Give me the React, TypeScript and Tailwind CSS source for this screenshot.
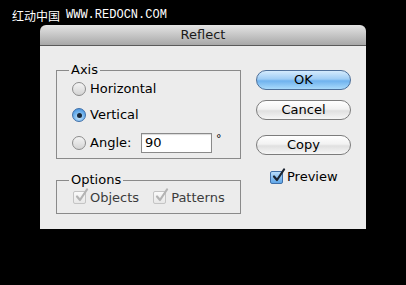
import React from "react";

const font = { fontFamily: '"DejaVu Sans", "Liberation Sans", sans-serif' };

function Radio({ checked }: { checked?: boolean }) {
  return checked ? (
    <div className="w-[14px] h-[14px] rounded-full border border-[#3f6fa8] bg-[radial-gradient(circle_at_50%_70%,#c8e6fc_0%,#6cb0ec_55%,#3a86d6_100%)] flex items-center justify-center shrink-0">
      <div className="w-[5px] h-[5px] rounded-full bg-[#1a2838]" />
    </div>
  ) : (
    <div className="w-[14px] h-[14px] rounded-full border border-[#8c8c8c] bg-[linear-gradient(#f4f4f4,#d4d4d4)] shrink-0" />
  );
}

function Check({ disabled, blue }: { disabled?: boolean; blue?: boolean }) {
  const box = blue
    ? "border-[#3f6fa8] bg-[linear-gradient(#b8dcfa,#5fa6e8)]"
    : "border-[#c4c4c4] bg-[linear-gradient(#fafafa,#e8e8e8)]";
  return (
    <div className={`relative w-[13px] h-[13px] rounded-[2px] border ${box} shrink-0`}>
      <svg className="absolute left-[1px] top-[-4px]" width="14" height="15" viewBox="0 0 14 15">
        <path
          d="M2 8.5 L5 12 L12 1.5"
          fill="none"
          stroke={disabled ? "#b4b4b4" : "#1c2430"}
          strokeWidth="2.2"
          strokeLinecap="round"
          strokeLinejoin="round"
        />
      </svg>
    </div>
  );
}

function Btn({ label, primary }: { label: string; primary?: boolean }) {
  return (
    <div
      className={`w-[95px] h-[20px] rounded-full border flex items-center justify-center text-[13px] text-black ${
        primary
          ? "border-[#4d6f99] bg-[linear-gradient(#d4ebfd_0%,#9fcdf5_45%,#6fb2ee_55%,#a9dafb_100%)]"
          : "border-[#7c7c7c] bg-[linear-gradient(#ffffff_0%,#f2f2f2_45%,#e0e0e0_55%,#f6f6f6_100%)]"
      }`}
    >
      {label}
    </div>
  );
}

export default function App() {
  return (
    <div className="w-[406px] h-[285px] bg-black overflow-hidden" style={font}>
      <div className="h-[25px] pl-[12px] pt-[9px] flex items-start text-white text-[12px] leading-[13px]">
        <span style={{ fontFamily: '"Noto Sans CJK SC", sans-serif' }}>红动中国</span>
        <span className="ml-[6px]" style={{ fontFamily: '"Liberation Mono", monospace' }}>
          WWW.REDOCN.COM
        </span>
      </div>
      <div className="ml-[40px] w-[326px]">
        <div className="h-[21px] rounded-t-[6px] border-b border-[#5a5a5a] bg-[linear-gradient(#e4e4e4,#a8a8a8)] flex items-center justify-center text-[13px] text-[#1a1a1a]">
          Reflect
        </div>
        <div className="h-[183px] bg-[#ececec] flex pl-[16px] pt-[24px] text-[13px] text-black">
          <div className="w-[185px] flex flex-col">
            <div className="relative h-[89px] border border-[#8a8a8a]">
              <div className="absolute left-[12px] top-[-9px] px-[2px] bg-[#ececec] leading-[16px]">Axis</div>
              <div className="flex flex-col pt-[5px] pl-[15px]">
                <div className="h-[26px] flex items-center gap-[4px]">
                  <Radio />
                  <span>Horizontal</span>
                </div>
                <div className="h-[26px] flex items-center gap-[4px]">
                  <Radio checked />
                  <span>Vertical</span>
                </div>
                <div className="h-[30px] flex items-center">
                  <Radio />
                  <span className="ml-[4px] w-[51px]">Angle:</span>
                  <div className="w-[71px] h-[20px] border border-[#8a8a8a] bg-white flex items-center pl-[3px] shadow-[inset_0_1px_1px_rgba(0,0,0,0.15)]">
                    90
                  </div>
                  <span className="ml-[4px] -mt-[8px] text-[11px]">°</span>
                </div>
              </div>
            </div>
            <div className="relative mt-[21px] h-[34px] border border-[#8a8a8a]">
              <div className="absolute left-[12px] top-[-9px] px-[2px] bg-[#ececec] leading-[16px]">Options</div>
              <div className="h-full flex items-center pl-[16px] pt-[1px] text-[#3c3c3c]">
                <Check disabled />
                <span className="ml-[4px]">Objects</span>
                <div className="ml-[14px]">
                  <Check disabled />
                </div>
                <span className="ml-[5px]">Patterns</span>
              </div>
            </div>
          </div>
          <div className="ml-[15px] flex flex-col">
            <Btn label="OK" primary />
            <div className="mt-[10px]">
              <Btn label="Cancel" />
            </div>
            <div className="mt-[15px]">
              <Btn label="Copy" />
            </div>
            <div className="mt-[14px] pl-[14px] flex items-center h-[16px]">
              <Check blue />
              <span className="ml-[4px]">Preview</span>
            </div>
          </div>
        </div>
      </div>
    </div>
  );
}
